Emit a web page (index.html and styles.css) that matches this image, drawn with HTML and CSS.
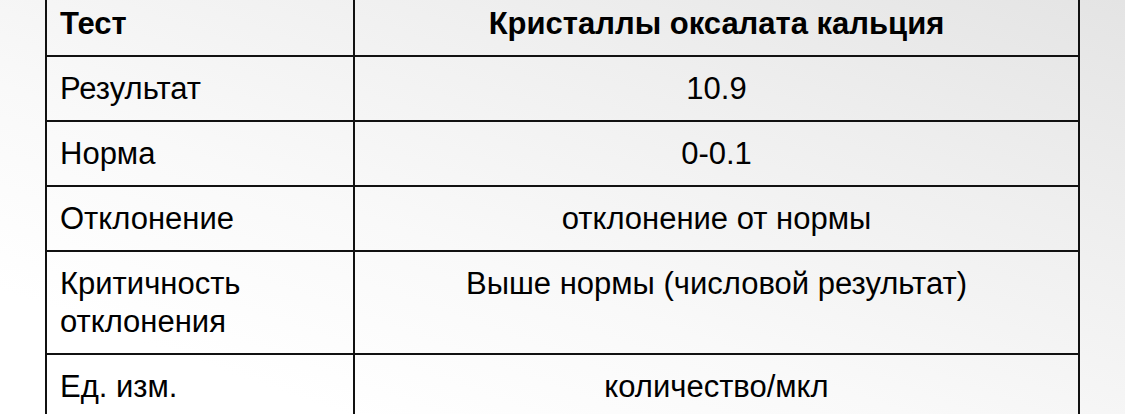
FILE: index.html
```html
<!DOCTYPE html>
<html lang="ru">
<head>
<meta charset="utf-8">
<title>Кристаллы оксалата кальция</title>
<link rel="stylesheet" href="styles.css">
</head>
<body>
<table class="result-table">
  <tr class="head">
    <td class="label">Тест</td>
    <td class="value">Кристаллы оксалата кальция</td>
  </tr>
  <tr>
    <td class="label">Результат</td>
    <td class="value">10.9</td>
  </tr>
  <tr>
    <td class="label">Норма</td>
    <td class="value">0-0.1</td>
  </tr>
  <tr>
    <td class="label">Отклонение</td>
    <td class="value">отклонение от нормы</td>
  </tr>
  <tr>
    <td class="label">Критичность<br>отклонения</td>
    <td class="value top">Выше нормы (числовой результат)</td>
  </tr>
  <tr>
    <td class="label">Ед. изм.</td>
    <td class="value">количество/мкл</td>
  </tr>
</table>
</body>
</html>
```
FILE: styles.css
```css
html, body {
  margin: 0;
  padding: 0;
  height: 100%;
}
body {
  width: 1125px;
  height: 414px;
  overflow: hidden;
  font-family: "Liberation Sans", Arial, sans-serif;
  color: #000;
  background: linear-gradient(200deg, #e4e4e4 0%, #efefef 30%, #f9f9f9 60%, #ffffff 85%);
}
.result-table {
  margin: -12px 0 0 45px;
  border-collapse: separate;
  border-spacing: 0;
  border-top: 2px solid #111;
  border-left: 2px solid #111;
  font-size: 31px;
  line-height: 38px;
}
.result-table td {
  border-right: 2px solid #111;
  border-bottom: 2px solid #111;
  padding: 13px 13px 12px;
  vertical-align: middle;
  box-sizing: border-box;
}
.result-table .label {
  width: 308px;
  text-align: left;
}
.result-table .value {
  width: 725px;
  text-align: center;
}
.result-table .value.top {
  vertical-align: top;
}
.result-table .head td {
  font-weight: bold;
  padding-top: 15px;
}
```
